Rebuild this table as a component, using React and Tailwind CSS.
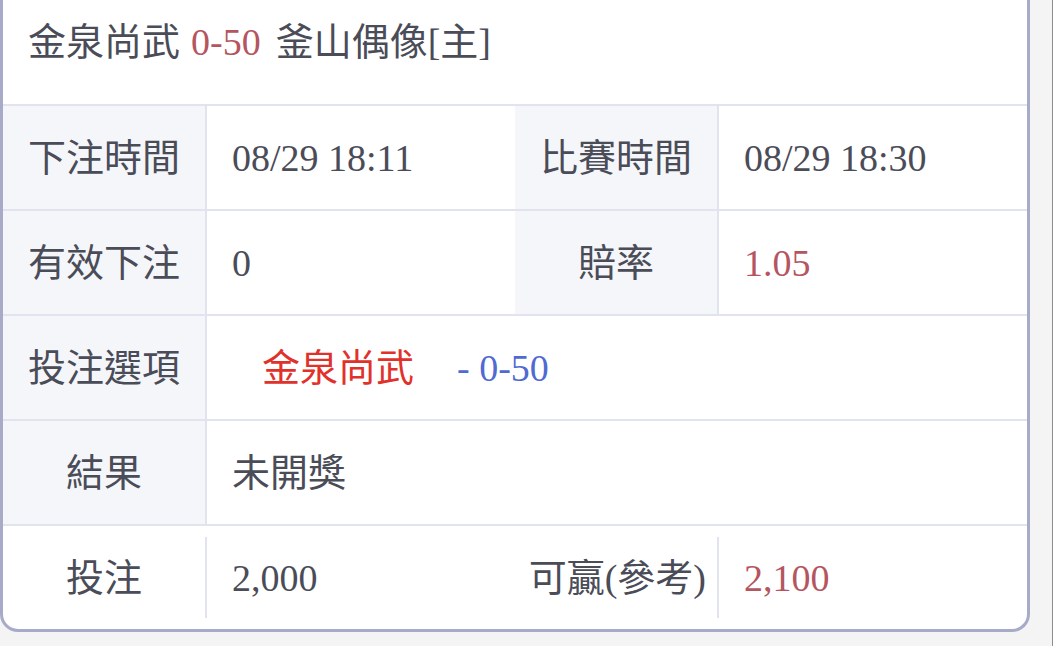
import React from 'react';

// Bet detail card (single ticket view)
const font = { fontFamily: '"Liberation Serif", "Noto Sans CJK TC", serif' };

const Label = ({ children, className = '' }) => (
  <div className={`flex items-center justify-center bg-[#f5f6fa] ${className}`}>{children}</div>
);

const Value = ({ children, className = '' }) => (
  <div className={`flex items-center border-l-2 border-[#e1e3ef] bg-white pl-[25px] ${className}`}>{children}</div>
);

export default function App() {
  return (
    <div className="flex h-[646px] w-[1053px] overflow-hidden bg-[#f4f4f5]" style={font}>
      <div className="flex flex-col self-start w-[1030px] overflow-hidden rounded-b-[18px] border-x-[3px] border-b-[3px] border-[#a8abc8] bg-white text-[38px] leading-none text-[#4a4c58]">
        {/* Header */}
        <div className="flex h-[106px] items-center border-b-2 border-[#e1e3ef] pb-[20px] pl-[25px]">
          <span>金泉尚武</span>
          <span className="ml-[11px] text-[#b5555f]">0-50</span>
          <span className="ml-[15px]">釜山偶像[主]</span>
        </div>

        {/* Times */}
        <div className="grid h-[105px] grid-cols-[202px_310px_202px_310px] border-b-2 border-[#e1e3ef]">
          <Label>下注時間</Label>
          <Value>08/29 18:11</Value>
          <Label>比賽時間</Label>
          <Value>08/29 18:30</Value>
        </div>

        {/* Stake / odds */}
        <div className="grid h-[105px] grid-cols-[202px_310px_202px_310px] border-b-2 border-[#e1e3ef]">
          <Label>有效下注</Label>
          <Value>0</Value>
          <Label>賠率</Label>
          <Value className="text-[#b5555f]">1.05</Value>
        </div>

        {/* Selection */}
        <div className="grid h-[105px] grid-cols-[202px_1fr] border-b-2 border-[#e1e3ef]">
          <Label>投注選項</Label>
          <Value className="pl-[55px]">
            <span className="text-[#e1312b]">金泉尚武</span>
            <span className="ml-[43px] text-[#4f6ad2]">- 0-50</span>
          </Value>
        </div>

        {/* Result */}
        <div className="grid h-[105px] grid-cols-[202px_1fr] border-b-2 border-[#e1e3ef]">
          <Label>結果</Label>
          <Value>未開獎</Value>
        </div>

        {/* Bet / win */}
        <div className="grid h-[103px] grid-cols-[202px_310px_202px_310px]">
          <div className="flex items-center justify-center">投注</div>
          <div className="flex items-center">
            <div className="h-[81px] w-[2px] bg-[#e1e3ef]" />
            <span className="ml-[25px]">2,000</span>
          </div>
          <div className="flex items-center justify-end pr-[11px]">可贏(參考)</div>
          <div className="flex items-center">
            <div className="h-[81px] w-[2px] bg-[#e1e3ef]" />
            <span className="ml-[25px] text-[#b5555f]">2,100</span>
          </div>
        </div>
      </div>
      <div className="ml-auto h-full w-px bg-[#8e8e8e]" />
    </div>
  );
}
